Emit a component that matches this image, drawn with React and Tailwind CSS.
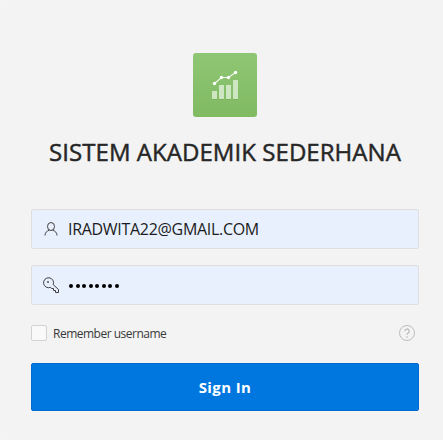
import React from "react";

function Logo() {
  return (
    <div className="h-16 w-16 rounded-[3px] bg-gradient-to-b from-[#8fc674] to-[#80ba61]">
      <svg viewBox="0 0 64 64" className="h-16 w-16">
        <g fill="#fff" fillOpacity="0.6">
          <path d="M19 38h5v8h-5zM26 32h5v14h-5zM33 32h5v14h-5zM40 27h5v19h-5z" />
        </g>
        <path d="M19 46h5M26 46h5M33 46h5M40 46h5" stroke="#5d8e44" strokeOpacity="0.3" transform="translate(0 .5)" />
        <path d="M21.5 30.5l7-6h7l7-5" fill="none" stroke="#fff" strokeOpacity="0.9" strokeWidth="1.1" />
        <g fill="#fff">
          <circle cx="21.5" cy="30.5" r="1.7" />
          <circle cx="28.5" cy="24.5" r="1.7" />
          <circle cx="35.5" cy="24.5" r="1.7" />
          <circle cx="42.5" cy="19.5" r="1.7" />
        </g>
      </svg>
    </div>
  );
}

function UserIcon() {
  return (
    <svg viewBox="0 0 16 16" className="h-4 w-4" fill="none" stroke="#404040">
      <ellipse cx="8" cy="5.5" rx="3.5" ry="4" />
      <path d="M2 14.500c0-2.800 1.700-4.500 4.300-5.300M14 14.500c0-2.800-1.700-4.500-4.300-5.300" />
    </svg>
  );
}

function KeyIcon() {
  return (
    <svg viewBox="0 0 16 16" className="h-4 w-4" fill="none" stroke="#404040" strokeLinejoin="round">
      <path d="M10.200 7.600A5 5 0 1 0 7.600 10.300L8.500 11.500H10.500V13.500H12.500V15.500H15.500V12.500Z" />
      <circle cx="5" cy="5" r="0.900" fill="#404040" stroke="none" />
    </svg>
  );
}

export default function App() {
  return (
    <main className="h-[440px] w-[443px] overflow-hidden rounded-l-[2px] bg-[#f3f3f3] pr-[24px] pl-[31px] pt-[53px] font-['Open_Sans','Noto_Sans',sans-serif]">
      <header className="flex flex-col items-center">
        <Logo />
        <h1 className="mt-[19px] whitespace-nowrap text-[24px] leading-8 font-normal tracking-[0.05px] text-[#262626] [-webkit-text-stroke:0.45px_#262626]">
          SISTEM AKADEMIK SEDERHANA
        </h1>
      </header>
      <form className="mt-[41px]">
        <div className="flex h-10 items-center rounded-[2px] border border-[#dfdfdf] bg-[#e8f0fe] pl-[11px]">
          <UserIcon />
          <span className="ml-[9px] text-[16px] tracking-[-0.3px] text-[#1c1c20]">IRADWITA22@GMAIL.COM</span>
        </div>
        <div className="mt-4 flex h-10 items-center rounded-[2px] border border-[#dfdfdf] bg-[#e8f0fe] pl-[11px]">
          <KeyIcon />
          <span className="mt-px ml-[10px] flex gap-[2.500px]" aria-label="Password">
            {Array.from({ length: 8 }, (_, i) => (
              <i key={i} className="h-1 w-1 rounded-full bg-black" />
            ))}
          </span>
        </div>
        <div className="mt-5 flex h-4 items-center">
          <span className="h-4 w-4 rounded-[2px] border border-[#d2d2d2] bg-[#f9f9f9]" />
          <span className="mt-px ml-[6px] text-[12px] leading-4 tracking-[-0.500px] text-[#393939]">Remember username</span>
          <svg viewBox="0 0 16 16" className="mr-1 ml-auto h-4 w-4" fill="none" stroke="#bdbdbd">
            <circle cx="8" cy="8" r="7.500" />
            <path d="M5.800 6.200a2.200 2.200 0 1 1 3.300 1.900Q8 8.700 8 9.800" strokeWidth="1.300" />
            <path d="M8 11.200v1.500" strokeWidth="1.300" />
          </svg>
        </div>
        <button
          type="button"
          className="mt-[22px] flex h-12 w-full items-center justify-center rounded-[2px] border border-[#006bd0] bg-[#0076df] text-[15px] font-bold tracking-[0.4px] text-white"
        >
          Sign In
        </button>
      </form>
    </main>
  );
}
